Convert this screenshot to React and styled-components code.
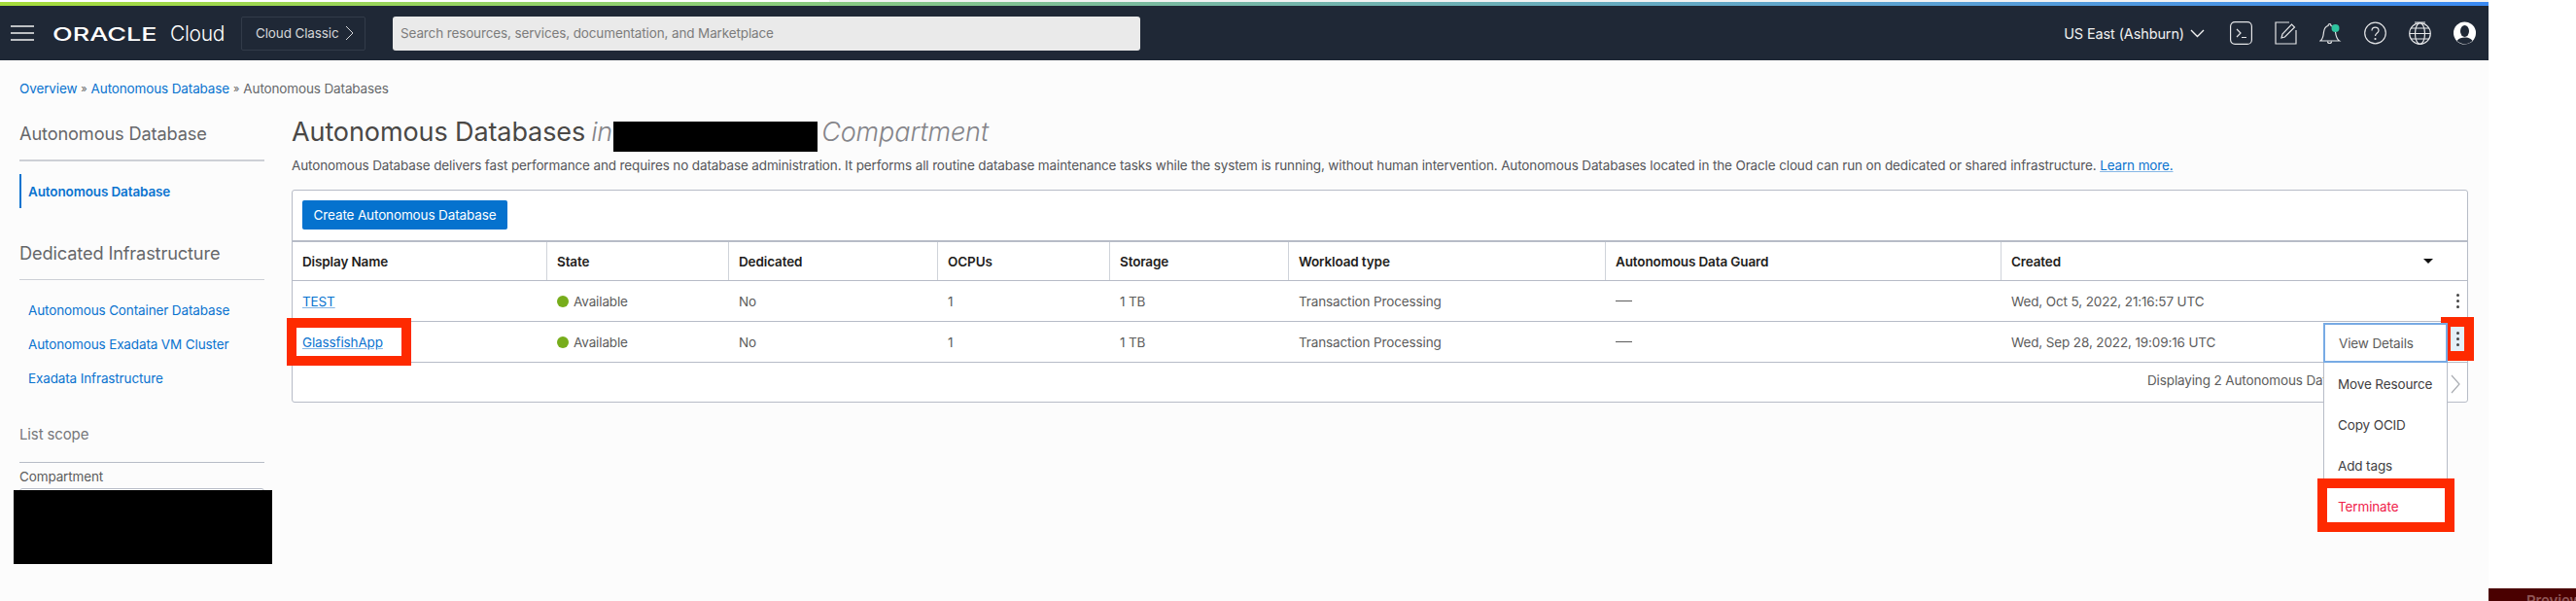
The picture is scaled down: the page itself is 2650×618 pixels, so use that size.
import React from 'react';
import styled, { createGlobalStyle } from 'styled-components';
import { FaApple } from 'react-icons/fa';

const GlobalStyle = createGlobalStyle`
  html, body {
    margin: 0;
    padding: 0;
    background: #fff;
    overflow: hidden;
  }
  body {
    font-family: Inter, "Liberation Sans", sans-serif;
    font-size: 13.5px;
    letter-spacing: -0.13px;
    color: #5c5c5c;
  }
  * {
    box-sizing: border-box;
  }
`;

const RED = '#fe2a00';
const LINK = '#0a73cf';
const LINE = '#b7bcc7';

const Shell = styled.div`
  width: 2560px;
  height: 618px;
  background: #fcfcfc;
`;

const TopStrip = styled.div`
  height: 2px;
  background: linear-gradient(to right, #fff 853px, #f3f3f3 853px);
`;

const Rainbow = styled.div`
  height: 4px;
  background: linear-gradient(to right, #a6dc3c 0%, #8dce7a 30%, #78b8a4 48%, #5aa0d4 78%, #3b8af2 100%);
`;

const Nav = styled.header`
  height: 56px;
  background: #1f2836;
  display: flex;
  align-items: center;
  padding: 0 13px 0 11px;
`;

const Burger = styled.svg`
  width: 24px;
  height: 16px;
  margin-right: 19px;
`;

const Logo = styled.div`
  display: flex;
  align-items: baseline;
  color: #fff;
  width: 194px;
  white-space: nowrap;
`;

const LogoMark = styled.span`
  font-size: 19px;
  font-weight: 500;
  display: inline-block;
  width: 114px;
  letter-spacing: 0;
  transform: scaleX(1.42);
  transform-origin: left center;
`;

const LogoCloud = styled.span`
  font-size: 21px;
  font-weight: 300;
  margin-left: 7px;
  letter-spacing: -0.3px;
`;

const ClassicButton = styled.div`
  width: 128px;
  height: 35px;
  border: 1px solid #323b49;
  border-radius: 2px;
  color: #d5d6d8;
  font-size: 13.5px;
  display: flex;
  align-items: center;
  padding-left: 14px;
  gap: 6px;
  white-space: nowrap;
`;

const SearchBox = styled.div`
  width: 769px;
  height: 35px;
  margin-left: 28px;
  background: #eaeaea;
  border-radius: 3px;
  color: #7c7c7c;
  display: flex;
  align-items: center;
  padding-left: 8px;
`;

const Region = styled.div`
  margin-left: auto;
  display: flex;
  align-items: center;
  gap: 6px;
  color: #f1f1f1;
  font-size: 14.5px;
  white-space: nowrap;
`;

const NavIcons = styled.div`
  display: flex;
  align-items: center;
  gap: 23px;
  margin-left: 26px;
`;

const NavIcon = styled.svg`
  width: 23px;
  height: 24px;
  fill: none;
  stroke: #e4e5e7;
  stroke-width: 1.2;
`;

const Body = styled.div`
  padding: 19px 21px 0 20px;
`;

const Breadcrumb = styled.nav`
  height: 20px;
  line-height: 20px;
  color: #66686b;
  display: flex;
  align-items: center;
  gap: 4px;
`;

const CrumbLink = styled.a`
  color: ${LINK};
`;

const CrumbSep = styled.span`
  font-size: 11px;
  color: #666;
`;

const Columns = styled.div`
  display: flex;
  gap: 28px;
  margin-top: 20px;
`;

const Sidebar = styled.aside`
  width: 252px;
  flex: none;
  padding-top: 2px;
`;

const SideHeading = styled.h3`
  margin: ${({ $top }) => $top || 0}px 0 0;
  padding-bottom: 13px;
  font-size: 18.2px;
  line-height: 28px;
  font-weight: 400;
  color: #66676a;
  border-bottom: ${({ $thick }) => ($thick ? 2 : 1)}px solid #cdd0d6;
  white-space: nowrap;
`;

const SideList = styled.div`
  margin-top: 13px;
`;

const SideItem = styled.div`
  height: 35px;
  display: flex;
  align-items: center;
  padding-left: 9px;
  color: ${LINK};
  font-weight: ${({ $active }) => ($active ? 600 : 400)};
  border-left: ${({ $active }) => ($active ? `2px solid ${LINK}` : 'none')};
  ${({ $active }) => ($active ? 'padding-left: 7px;' : '')}
`;

const ScopeHeading = styled.h4`
  margin: 30px 0 0;
  padding-bottom: 17px;
  font-size: 15px;
  line-height: 22px;
  font-weight: 400;
  color: #76777a;
  border-bottom: 1px solid ${LINE};
`;

const ScopeLabel = styled.div`
  margin-top: 4px;
  line-height: 20px;
  color: #5c5c5c;
`;

const ScopeSelect = styled.div`
  position: relative;
  margin-top: 2px;
  height: 34px;
  border: 1px solid ${LINE};
  border-radius: 3px;
`;

const ScopeRedaction = styled.div`
  position: absolute;
  left: -7px;
  top: 1px;
  width: 266px;
  height: 76px;
  background: #000;
`;

const Main = styled.main`
  width: 2239px;
  flex: none;
`;

const Title = styled.h1`
  margin: -5px 0 0;
  height: 38px;
  display: flex;
  align-items: center;
  font-size: 27px;
  font-weight: 400;
  letter-spacing: -0.1px;
  color: #4a4846;
  white-space: nowrap;
`;

const TitleEm = styled.em`
  color: #85858a;
  font-weight: 300;
  margin-left: ${({ $left }) => $left}px;
`;

const TitleRedaction = styled.span`
  align-self: flex-start;
  width: 210px;
  height: 31px;
  margin: 9px 0 0 1px;
  background: #000;
`;

const Description = styled.p`
  margin: 6px 0 0;
  line-height: 20px;
  color: #55565a;
  white-space: nowrap;
`;

const UnderLink = styled.a`
  color: ${LINK};
  text-decoration: underline;
  text-decoration-color: #86b7e6;
`;

const Panel = styled.section`
  margin-top: 15px;
  height: 219px;
  background: #fff;
  border: 1px solid ${LINE};
  border-radius: 3px;
`;

const PanelActions = styled.div`
  height: 51px;
  padding: 10px;
`;

const PrimaryButton = styled.div`
  width: 211px;
  height: 30px;
  background: #0572ce;
  color: #fff;
  border-radius: 2px;
  display: flex;
  align-items: center;
  justify-content: center;
  white-space: nowrap;
`;

const Row = styled.div`
  position: relative;
  display: grid;
  grid-template-columns: 262px 187px 215px 177px 184px 326px 407px 479px;
  height: 42px;
  border-top: ${({ $head }) => ($head ? `2px solid ${LINE}` : 'none')};
  border-bottom: 1px solid ${LINE};
`;

const Cell = styled.div`
  position: relative;
  display: flex;
  align-items: center;
  padding-left: 10px;
  white-space: nowrap;
  color: #5c5c5c;
`;

const HeadCell = styled(Cell)`
  color: #1e1d1b;
  font-weight: 600;
  border-right: ${({ $last }) => ($last ? 'none' : '1px solid #cfd3da')};
`;

const SortArrow = styled.span`
  margin-left: auto;
  margin-right: 35px;
  width: 0;
  height: 0;
  border-left: 5px solid transparent;
  border-right: 5px solid transparent;
  border-top: 5px solid #111;
`;

const RecordLink = styled.a`
  color: ${LINK};
  text-decoration: underline;
  text-decoration-color: #86b7e6;
`;

const RedFrame = styled.span`
  display: flex;
  align-items: center;
  width: 108px;
  height: 29px;
  margin-left: -6px;
  padding-left: 6px;
  background: #fff;
  outline: 10px solid ${RED};
`;

const StatusDot = styled.span`
  width: 12px;
  height: 12px;
  border-radius: 50%;
  background: #77ad1b;
  margin-right: 5px;
`;

const Dash = styled.span`
  display: block;
  width: 17px;
  height: 1px;
  background: #5c5c5c;
`;

const Kebab = styled.button`
  position: absolute;
  right: 3px;
  top: ${({ $open }) => ($open ? 5 : 8)}px;
  width: 14px;
  height: 25px;
  padding: 0;
  border: none;
  display: flex;
  flex-direction: column;
  align-items: center;
  justify-content: center;
  gap: 3px;
  background: ${({ $open }) => ($open ? '#e4f0f8' : 'transparent')};
  ${({ $open }) => ($open ? `outline: 10px solid ${RED};` : '')}
`;

const KebabDot = styled.span`
  width: 3px;
  height: 3px;
  border-radius: 50%;
  background: #444;
`;

const Menu = styled.div`
  position: absolute;
  left: 331px;
  top: 1px;
  z-index: 2;
  width: 128px;
  height: 210px;
  background: #fff;
  border: 1px solid ${LINE};
  border-top: none;
  color: #3f4042;
`;

const MenuItem = styled.div`
  height: 42px;
  display: flex;
  align-items: center;
  padding-left: 14px;
`;

const FocusedItem = styled(MenuItem)`
  margin-left: -1px;
  margin-right: -1px;
  height: 41px;
  margin-bottom: 1px;
  padding-left: 14px;
  border: 2px solid #77aae4;
  color: #5c5c5c;
`;

const DangerItem = styled.div`
  margin: 2px 2px 0 3px;
  width: 121px;
  height: 35px;
  display: flex;
  align-items: center;
  padding: 2px 0 0 11px;
  background: #fff;
  color: #f0234b;
  outline: 10px solid ${RED};
`;

const PanelFooter = styled.div`
  height: 39px;
  display: flex;
  align-items: center;
  color: #5c5c5c;
  padding: 0 7px 3px 1908px;
  white-space: nowrap;
`;

const PagerArrow = styled.svg`
  margin-left: auto;
  width: 10px;
  height: 20px;
  margin-top: 8px;
  fill: none;
  stroke: #a9acb2;
  stroke-width: 1.2;
`;

const PreviewBar = styled.div`
  position: absolute;
  left: 2560px;
  top: 605px;
  width: 90px;
  height: 13px;
  overflow: hidden;
  background: #4a0000;
  color: #8f5555;
  display: flex;
  align-items: flex-start;
  font-size: 15px;
  font-weight: 600;
  line-height: 18px;
  padding: 4px 0 0 22px;
  gap: 17px;
`;

const columns = ['Display Name', 'State', 'Dedicated', 'OCPUs', 'Storage', 'Workload type', 'Autonomous Data Guard', 'Created'];

const KebabIcon = () => (
  <>
    <KebabDot />
    <KebabDot />
    <KebabDot />
  </>
);

const DatabaseRow = ({ name, created, framed, open }) => (
  <Row>
    <Cell>
      {framed ? (
        <RedFrame>
          <RecordLink>{name}</RecordLink>
        </RedFrame>
      ) : (
        <RecordLink>{name}</RecordLink>
      )}
    </Cell>
    <Cell>
      <StatusDot />
      Available
    </Cell>
    <Cell>No</Cell>
    <Cell>1</Cell>
    <Cell>1 TB</Cell>
    <Cell>Transaction Processing</Cell>
    <Cell>
      <Dash />
    </Cell>
    <Cell>
      {created}
      <Kebab $open={open}>
        <KebabIcon />
      </Kebab>
      {open && (
        <Menu>
          <FocusedItem>View Details</FocusedItem>
          <MenuItem>Move Resource</MenuItem>
          <MenuItem>Copy OCID</MenuItem>
          <MenuItem>Add tags</MenuItem>
          <DangerItem>Terminate</DangerItem>
        </Menu>
      )}
    </Cell>
  </Row>
);

const App = () => (
  <>
    <GlobalStyle />
    <Shell>
      <TopStrip />
      <Rainbow />
      <Nav>
        <Burger viewBox="0 0 24 16" fill="none" stroke="#f2f2f2" strokeWidth="1.5">
          <path d="M0 1h24M0 8h24M0 15h24" />
        </Burger>
        <Logo>
          <LogoMark>ORACLE</LogoMark>
          <LogoCloud>Cloud</LogoCloud>
        </Logo>
        <ClassicButton>
          Cloud Classic
          <svg width="9" height="16" viewBox="0 0 9 16" fill="none" stroke="#d5d6d8" strokeWidth="1">
            <path d="M1 1l7 7-7 7" />
          </svg>
        </ClassicButton>
        <SearchBox>Search resources, services, documentation, and Marketplace</SearchBox>
        <Region>
          US East (Ashburn)
          <svg width="15" height="9" viewBox="0 0 15 9" fill="none" stroke="#f1f1f1" strokeWidth="1.4">
            <path d="M1 1l6.5 6.5L14 1" />
          </svg>
        </Region>
        <NavIcons>
          <NavIcon viewBox="0 0 23 24">
            <rect x="0.6" y="0.6" width="21.8" height="22.8" rx="4.5" />
            <path d="M7 8l4 4-4 4M12 16.5h5" />
          </NavIcon>
          <NavIcon viewBox="0 0 23 24">
            <path d="M15 1H1v22h21V9" />
            <path d="M7 17l1-4L17.500 3l3 3L10.500 16z" />
          </NavIcon>
          <NavIcon viewBox="0 0 23 24">
            <path d="M1 20c3-2 3-5 3.500-9C5 7 7 5 9 4.500C9 2 12 2 12 4.500c2 .5 4 2.500 4.500 6.500.5 4 1 7 4 9z" />
            <path d="M8.500 20.500a2 2 0 0 0 4 0" />
            <circle cx="16.500" cy="7" r="4" fill="#2fc4a0" stroke="none" />
          </NavIcon>
          <NavIcon viewBox="0 0 23 24">
            <circle cx="11.500" cy="12" r="10.800" />
            <path d="M8 9.500c0-4.500 7-4.500 7 0 0 2.500-3.500 2.500-3.500 5.500" />
            <circle cx="11.500" cy="18" r="0.5" />
          </NavIcon>
          <NavIcon viewBox="0 0 23 24">
            <circle cx="11.500" cy="12.500" r="10.800" />
            <ellipse cx="11.500" cy="12.500" rx="5" ry="10.800" />
            <path d="M1 12.500h21M2.500 7h18M2.500 18h18M6 1h11" />
          </NavIcon>
          <NavIcon viewBox="0 0 23 24" style={{ stroke: 'none' }}>
            <circle cx="11.500" cy="12" r="11.500" fill="#fff" />
            <ellipse cx="11.500" cy="10" rx="4.500" ry="6" fill="#1f2836" />
            <path d="M3.500 20c2-3 5-3.500 8-3.500s6 .5 8 3.500c-2 2-5 3.200-8 3.200s-6-1.200-8-3.200z" fill="#1f2836" />
          </NavIcon>
        </NavIcons>
      </Nav>
      <Body>
        <Breadcrumb>
          <CrumbLink>Overview</CrumbLink>
          <CrumbSep>»</CrumbSep>
          <CrumbLink>Autonomous Database</CrumbLink>
          <CrumbSep>»</CrumbSep>
          <span>Autonomous Databases</span>
        </Breadcrumb>
        <Columns>
          <Sidebar>
            <SideHeading $thick>Autonomous Database</SideHeading>
            <SideList>
              <SideItem $active>Autonomous Database</SideItem>
            </SideList>
            <SideHeading $top={32}>Dedicated Infrastructure</SideHeading>
            <SideList>
              <SideItem>Autonomous Container Database</SideItem>
              <SideItem>Autonomous Exadata VM Cluster</SideItem>
              <SideItem>Exadata Infrastructure</SideItem>
            </SideList>
            <ScopeHeading>List scope</ScopeHeading>
            <ScopeLabel>Compartment</ScopeLabel>
            <ScopeSelect>
              <ScopeRedaction />
            </ScopeSelect>
          </Sidebar>
          <Main>
            <Title>
              Autonomous Databases
              <TitleEm $left={6}>in</TitleEm>
              <TitleRedaction />
              <TitleEm $left={4}>Compartment</TitleEm>
            </Title>
            <Description>
              Autonomous Database delivers fast performance and requires no database administration. It performs all routine database maintenance tasks while the system is running, without human intervention. Autonomous Databases located in the Oracle cloud can run on dedicated or shared infrastructure. <UnderLink>Learn more.</UnderLink>
            </Description>
            <Panel>
              <PanelActions>
                <PrimaryButton>Create Autonomous Database</PrimaryButton>
              </PanelActions>
              <Row $head>
                {columns.map((label, i) => (
                  <HeadCell key={label} $last={i === columns.length - 1}>
                    {label}
                    {i === columns.length - 1 && <SortArrow />}
                  </HeadCell>
                ))}
              </Row>
              <DatabaseRow name="TEST" created="Wed, Oct 5, 2022, 21:16:57 UTC" />
              <DatabaseRow name="GlassfishApp" created="Wed, Sep 28, 2022, 19:09:16 UTC" framed open />
              <PanelFooter>
                Displaying 2 Autonomous Databases
                <PagerArrow viewBox="0 0 10 20">
                  <path d="M1 1l8 9-8 9" />
                </PagerArrow>
              </PanelFooter>
            </Panel>
          </Main>
        </Columns>
      </Body>
    </Shell>
    <PreviewBar>
      <FaApple size={13} />
      Preview
    </PreviewBar>
  </>
);

export default App;
